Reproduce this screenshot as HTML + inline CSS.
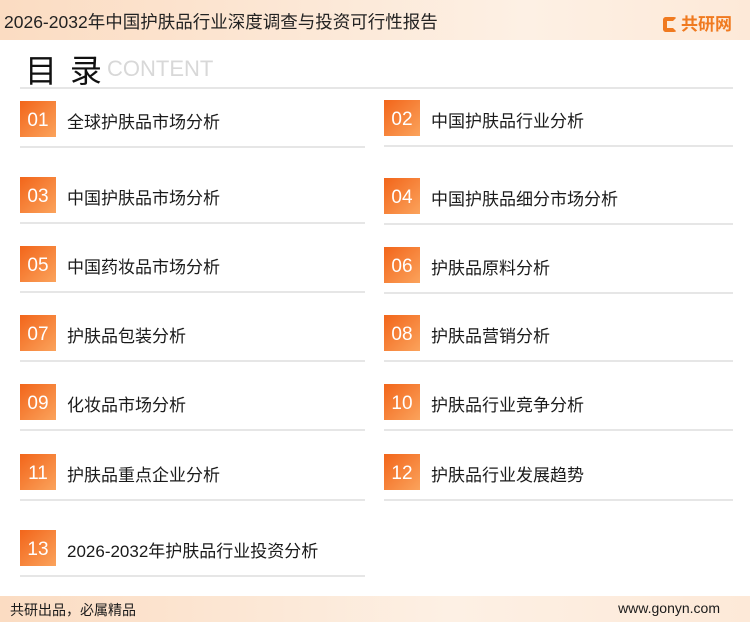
<!DOCTYPE html>
<html><head><meta charset="utf-8"><style>
*{margin:0;padding:0;box-sizing:border-box}
body{width:750px;height:622px;position:relative;background:#fff;font-family:"Liberation Sans","Noto Sans CJK SC",sans-serif;overflow:hidden;color:#1a1a1a}
.hd{position:absolute;left:0;top:0;width:750px;height:40px;background:linear-gradient(90deg,#fbdcc2,#fdf0e4 70%,#fde9d8)}
.hd .t{position:absolute;left:4px;top:9px;font-size:17.5px;color:#222}
.logo{position:absolute;left:663px;top:10px;font-size:17px;font-weight:bold;color:#f07a20}
.logo span{display:inline-block;width:14px;height:15px;border:4px solid #f07a20;border-right-color:transparent;border-radius:3px;vertical-align:-2px;margin-right:4px}
.ft{position:absolute;left:0;top:596px;width:750px;height:26px;background:linear-gradient(90deg,#fbdcc2,#fdf0e4 60%,#fde9d8)}
.ft .a{position:absolute;left:10px;top:4px;font-size:14px}
.ft .b{position:absolute;right:30px;top:4px;font-size:14px}
.ttl{position:absolute;left:25px;top:46px;font-size:32px;color:#111;letter-spacing:2px}
.ct{position:absolute;left:107px;top:56px;font-size:22px;color:#d8d8d8}
.hl{position:absolute;left:20px;top:87px;width:713px;height:2px;background:#e6e6e6}
.it{position:absolute}
.bx{position:absolute;left:0;top:0;width:36px;height:36px;background:linear-gradient(135deg,#f2651a,#fba35c);color:#fff;font-size:19px;display:flex;align-items:center;justify-content:center;padding-top:4px}
.tx{position:absolute;left:47px;top:7px;font-size:17px;white-space:nowrap;color:#1a1a1a}
.ln{position:absolute;left:0;top:45px;height:2px;background:#e6e6e6}
.L .ln{width:345px}.R .ln{width:349px}
.L{left:20px}.R{left:384px}
</style></head><body>
<div class="hd"><div class="t">2026-2032年中国护肤品行业深度调查与投资可行性报告</div><div class="logo"><span></span>共研网</div></div>
<div class="ttl">目 录</div><div class="ct">CONTENT</div><div class="hl"></div>

<div class="it L" style="top:101px"><div class="bx">01</div><div class="tx">全球护肤品市场分析</div><div class="ln"></div></div>
<div class="it R" style="top:100px"><div class="bx">02</div><div class="tx">中国护肤品行业分析</div><div class="ln"></div></div>
<div class="it L" style="top:177px"><div class="bx">03</div><div class="tx">中国护肤品市场分析</div><div class="ln"></div></div>
<div class="it R" style="top:178px"><div class="bx">04</div><div class="tx">中国护肤品细分市场分析</div><div class="ln"></div></div>
<div class="it L" style="top:246px"><div class="bx">05</div><div class="tx">中国药妆品市场分析</div><div class="ln"></div></div>
<div class="it R" style="top:247px"><div class="bx">06</div><div class="tx">护肤品原料分析</div><div class="ln"></div></div>
<div class="it L" style="top:315px"><div class="bx">07</div><div class="tx">护肤品包装分析</div><div class="ln"></div></div>
<div class="it R" style="top:315px"><div class="bx">08</div><div class="tx">护肤品营销分析</div><div class="ln"></div></div>
<div class="it L" style="top:384px"><div class="bx">09</div><div class="tx">化妆品市场分析</div><div class="ln"></div></div>
<div class="it R" style="top:384px"><div class="bx">10</div><div class="tx">护肤品行业竞争分析</div><div class="ln"></div></div>
<div class="it L" style="top:454px"><div class="bx">11</div><div class="tx">护肤品重点企业分析</div><div class="ln"></div></div>
<div class="it R" style="top:454px"><div class="bx">12</div><div class="tx">护肤品行业发展趋势</div><div class="ln"></div></div>
<div class="it L" style="top:530px"><div class="bx">13</div><div class="tx">2026-2032年护肤品行业投资分析</div><div class="ln"></div></div>

<div class="ft"><div class="a">共研出品，必属精品</div><div class="b">www.gonyn.com</div></div>
</body></html>
